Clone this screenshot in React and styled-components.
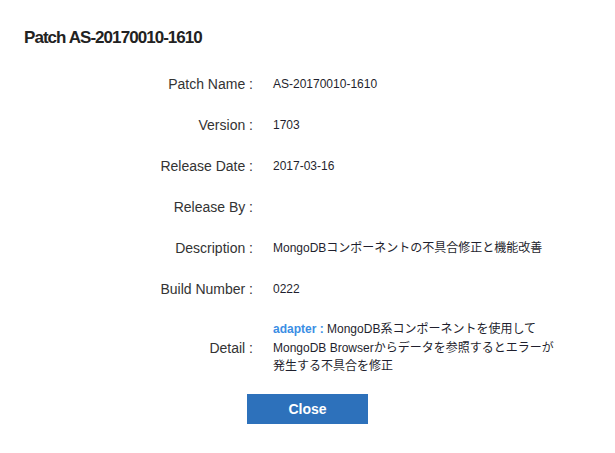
import React from 'react';
import styled, { createGlobalStyle } from 'styled-components';

const GlobalStyle = createGlobalStyle`
  body {
    margin: 0;
    background: #fff;
    font-family: "Liberation Sans", Arial, "Noto Sans CJK JP", sans-serif;
  }
`;

const Dialog = styled.div`
  width: 615px;
  box-sizing: border-box;
  padding: 28px 24px 0;
`;

const Title = styled.h2`
  margin: 0 0 26px;
  font-size: 17px;
  line-height: 20px;
  font-weight: bold;
  color: #222;
  letter-spacing: -0.95px;
`;

const Fields = styled.div`
  display: grid;
  grid-template-columns: 229px 282px;
  column-gap: 20px;
  row-gap: 21px;
  align-items: center;
`;

const Label = styled.div`
  text-align: right;
  font-size: 14px;
  line-height: 20px;
  color: #333;
  white-space: nowrap;
`;

const Value = styled.div`
  font-size: 12px;
  line-height: 18.5px;
  color: #1f1f2e;
  min-height: 18px;
`;

const Key = styled.span`
  color: #3b8ee4;
  font-weight: bold;
`;

const Footer = styled.div`
  display: flex;
  justify-content: center;
  margin-top: 18px;
`;

const Button = styled.button`
  width: 121px;
  height: 30px;
  border: none;
  background-color: #2d71bb;
  color: #fff;
  font-family: inherit;
  font-size: 14px;
  font-weight: bold;
  cursor: pointer;
`;

const fields = [
  ['Patch Name', 'AS-20170010-1610'],
  ['Version', '1703'],
  ['Release Date', '2017-03-16'],
  ['Release By', ''],
  ['Description', 'MongoDBコンポーネントの不具合修正と機能改善'],
  ['Build Number', '0222'],
];

function App() {
  return (
    <Dialog>
      <GlobalStyle />
      <Title>Patch AS-20170010-1610</Title>
      <Fields>
        {fields.map(([label, value]) => (
          <React.Fragment key={label}>
            <Label>{label} :</Label>
            <Value>{value}</Value>
          </React.Fragment>
        ))}
        <Label>Detail :</Label>
        <Value>
          <Key>adapter :</Key> MongoDB系コンポーネントを使用して
          MongoDB Browserからデータを参照するとエラーが発生する不具合を修正
        </Value>
      </Fields>
      <Footer>
        <Button>Close</Button>
      </Footer>
    </Dialog>
  );
}

export default App;
